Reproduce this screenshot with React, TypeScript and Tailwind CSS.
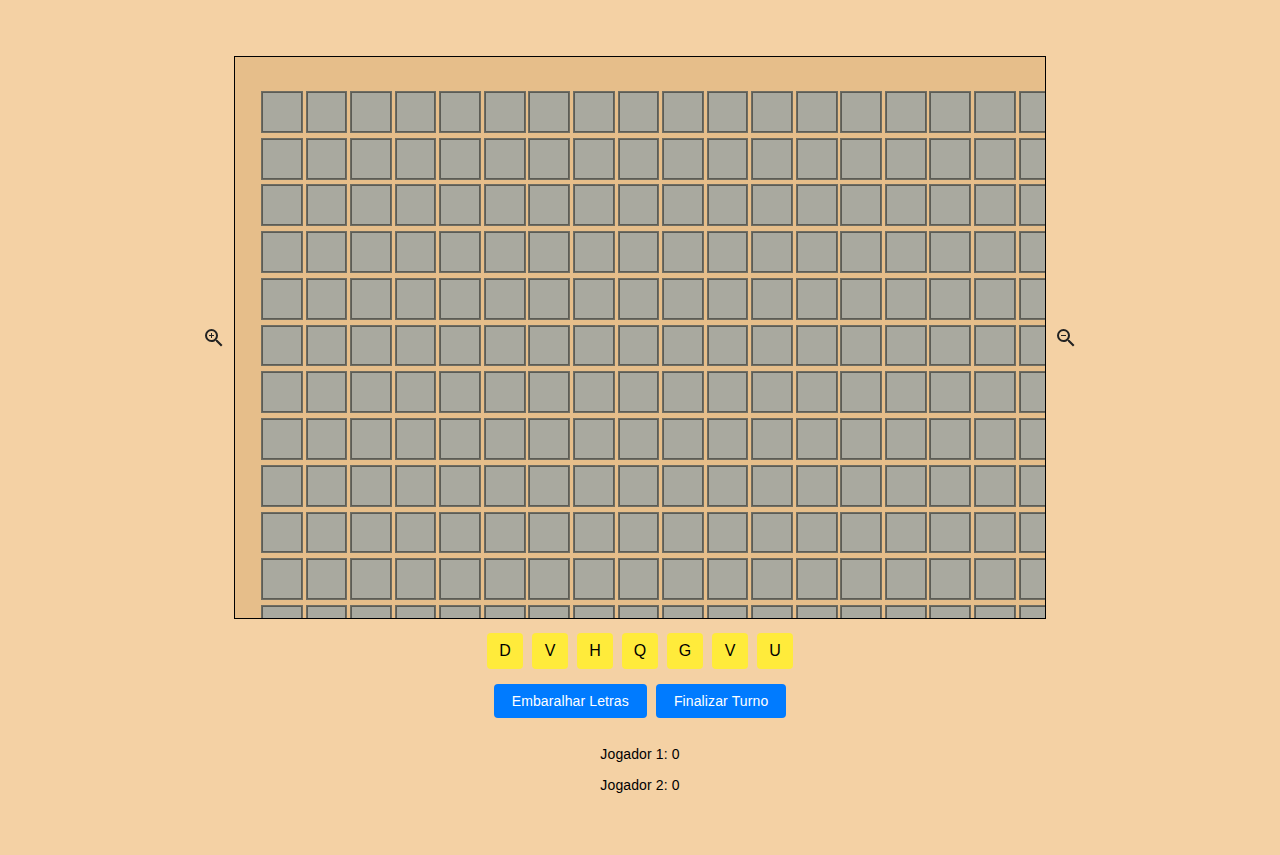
import { MdZoomIn, MdZoomOut } from 'react-icons/md';

const COLS = Array.from({ length: 18 });
const ROWS = Array.from({ length: 12 });
const letters = ['D', 'V', 'H', 'Q', 'G', 'V', 'U'];

const App = () => {
  return (
    <div className="min-h-[855px] bg-[#f4d1a4] pt-[56px] font-['Liberation_Sans',Arial,sans-serif] text-black">
      <div className="flex items-center justify-center">
        <button className="mr-[8px] text-[#222]">
          <MdZoomIn size={24} />
        </button>
        <div className="h-[563px] w-[812px] overflow-hidden border border-black bg-[#e6be8a] pl-[26px] pt-[34px]">
          <div className="grid w-max grid-cols-[repeat(18,41.8px)] gap-x-[2.78px] gap-y-[4.95px]">
            {ROWS.map((_, r) =>
              COLS.map((_, c) => (
                <div
                  key={`${r}-${c}`}
                  className="h-[41.8px] border border-[#6f6d62] bg-[#a9a99f] shadow-[inset_0_0_0_1px_#5c5c55]"
                />
              )),
            )}
          </div>
        </div>
        <button className="ml-[8px] text-[#222]">
          <MdZoomOut size={24} />
        </button>
      </div>

      <div className="mt-[14px] flex justify-center gap-[9px]">
        {letters.map((l, i) => (
          <div
            key={i}
            className="flex h-[36px] w-[36px] items-center justify-center rounded-[4px] bg-[#ffeb3b] text-[16px]"
          >
            {l}
          </div>
        ))}
      </div>

      <div className="mt-[15px] flex justify-center gap-[9px] tracking-[0.12px]">
        <button className="h-[34px] rounded-[4px] bg-[#007bff] px-[18px] text-[14px] text-white">
          Embaralhar Letras
        </button>
        <button className="h-[34px] rounded-[4px] bg-[#007bff] px-[18px] text-[14px] text-white">
          Finalizar Turno
        </button>
      </div>

      <div className="mt-[20px] text-center text-[14px] tracking-[0.12px]">
        <p className="py-[8px] leading-[16px]">Jogador 1: 0</p>
        <p className="py-[7px] leading-[16px]">Jogador 2: 0</p>
      </div>
    </div>
  );
};

export default App;
